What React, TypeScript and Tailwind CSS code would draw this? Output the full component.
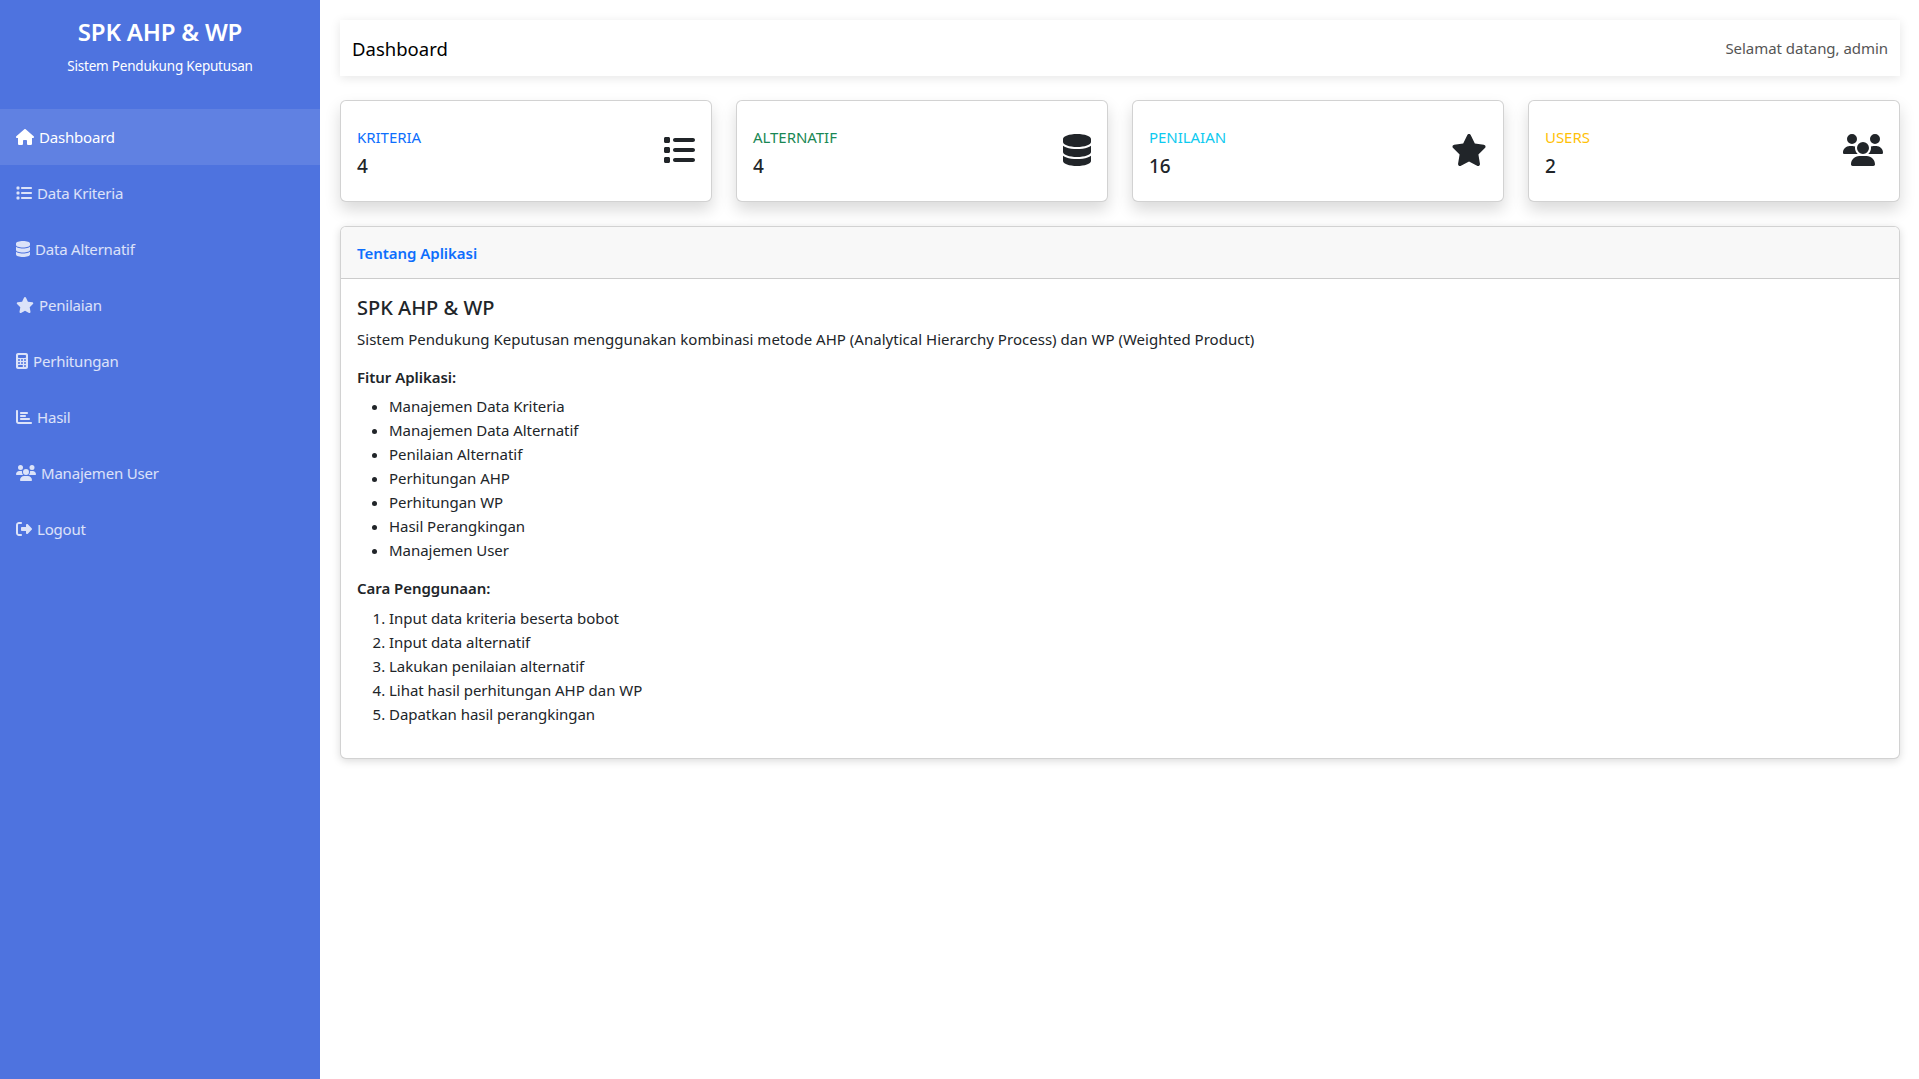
import { FaHouse, FaList, FaDatabase, FaStar, FaCalculator, FaChartBar, FaUsers, FaRightFromBracket } from 'react-icons/fa6';
import type { IconType } from 'react-icons';

const navItems: { label: string; icon: IconType; iconWidth: string; active?: boolean }[] = [
  { label: 'Dashboard', icon: FaHouse, iconWidth: 'w-[18px]', active: true },
  { label: 'Data Kriteria', icon: FaList, iconWidth: 'w-[16px]' },
  { label: 'Data Alternatif', icon: FaDatabase, iconWidth: 'w-[14px]' },
  { label: 'Penilaian', icon: FaStar, iconWidth: 'w-[18px]' },
  { label: 'Perhitungan', icon: FaCalculator, iconWidth: 'w-[12px]' },
  { label: 'Hasil', icon: FaChartBar, iconWidth: 'w-[16px]' },
  { label: 'Manajemen User', icon: FaUsers, iconWidth: 'w-[20px]' },
  { label: 'Logout', icon: FaRightFromBracket, iconWidth: 'w-[16px]' },
];

const stats: { label: string; value: string; icon: IconType; iconWidth: string; color: string }[] = [
  { label: 'KRITERIA', value: '4', icon: FaList, iconWidth: 'w-[32px]', color: 'text-[#0d6efd]' },
  { label: 'ALTERNATIF', value: '4', icon: FaDatabase, iconWidth: 'w-[28px]', color: 'text-[#198754]' },
  { label: 'PENILAIAN', value: '16', icon: FaStar, iconWidth: 'w-[36px]', color: 'text-[#0dcaf0]' },
  { label: 'USERS', value: '2', icon: FaUsers, iconWidth: 'w-[40px]', color: 'text-[#ffc107]' },
];

const fitur = [
  'Manajemen Data Kriteria',
  'Manajemen Data Alternatif',
  'Penilaian Alternatif',
  'Perhitungan AHP',
  'Perhitungan WP',
  'Hasil Perangkingan',
  'Manajemen User',
];

const cara = [
  'Input data kriteria beserta bobot',
  'Input data alternatif',
  'Lakukan penilaian alternatif',
  'Lihat hasil perhitungan AHP dan WP',
  'Dapatkan hasil perangkingan',
];

export default function App() {
  return (
    <div className="flex min-h-[1079px] bg-white font-['Noto_Sans',sans-serif] text-[15px] tracking-[-0.04px] text-[#212529]">
      {/* Sidebar */}
      <aside className="w-[320px] shrink-0 bg-[#4e73df] text-white">
        <div className="h-[109px] pt-[16px] text-center">
          <h4 className="text-[24px] leading-[31px] font-semibold tracking-[-0.2px]">SPK AHP &amp; WP</h4>
          <p className="mt-[9px] text-[13.5px] leading-[21px] tracking-[-0.2px]">Sistem Pendukung Keputusan</p>
        </div>
        <nav className="tracking-[-0.2px]">
          {navItems.map((item) => (
            <a
              key={item.label}
              className={`flex h-[56px] items-center gap-[5px] px-[16px] ${
                item.active ? 'bg-white/10 text-white' : 'text-white/80'
              }`}
            >
              <item.icon className={`h-[16px] ${item.iconWidth}`} />
              {item.label}
            </a>
          ))}
        </nav>
      </aside>

      {/* Main content */}
      <main className="min-w-0 flex-1 py-[20px] pr-[19px] pl-[20px]">
        <header className="mb-[24px] flex h-[56px] items-center justify-between bg-white px-[12px] pt-[1px] shadow-[0_2px_10px_rgba(0,0,0,0.1)]">
          <span className="text-[18.5px] tracking-normal text-black">Dashboard</span>
          <span className="text-[#555]">Selamat datang, admin</span>
        </header>

        <div className="mb-[24px] grid grid-cols-4 gap-[24px]">
          {stats.map((stat) => (
            <div
              key={stat.label}
              className="flex h-[102px] items-center justify-between rounded-[6px] border border-black/[0.176] bg-white px-[16px] shadow-[0_8px_16px_rgba(0,0,0,0.15)]"
            >
              <div>
                <div className={`leading-[24px] ${stat.color}`}>{stat.label}</div>
                <div className="mt-[5px] text-[19px] leading-[24px] font-medium tracking-normal">{stat.value}</div>
              </div>
              <stat.icon className={`mb-[2px] h-[32px] ${stat.iconWidth}`} />
            </div>
          ))}
        </div>

        <section className="h-[533px] overflow-hidden rounded-[6px] border border-black/[0.176] bg-white shadow-[0_2px_8px_rgba(0,0,0,0.15)]">
          <div className="flex h-[52px] items-center border-b border-black/[0.176] bg-[#f8f8f8] px-[16px] pt-[1px] font-semibold text-[#0d6efd]">
            Tentang Aplikasi
          </div>
          <div className="px-[16px] pt-[17px]">
            <h5 className="text-[20px] leading-[24px] font-medium tracking-normal">SPK AHP &amp; WP</h5>
            <p className="mt-[7px] leading-[24px] tracking-[0.02px]">
              Sistem Pendukung Keputusan menggunakan kombinasi metode AHP (Analytical Hierarchy Process) dan WP (Weighted Product)
            </p>
            <p className="mt-[14px] leading-[24px] font-semibold">Fitur Aplikasi:</p>
            <ul className="mt-[5px] list-disc pl-[32px] leading-[24px]">
              {fitur.map((f) => (
                <li key={f}>{f}</li>
              ))}
            </ul>
            <p className="mt-[14px] leading-[24px] font-semibold">Cara Penggunaan:</p>
            <ol className="mt-[6px] list-decimal pl-[32px] leading-[24px]">
              {cara.map((c) => (
                <li key={c}>{c}</li>
              ))}
            </ol>
          </div>
        </section>
      </main>
    </div>
  );
}
